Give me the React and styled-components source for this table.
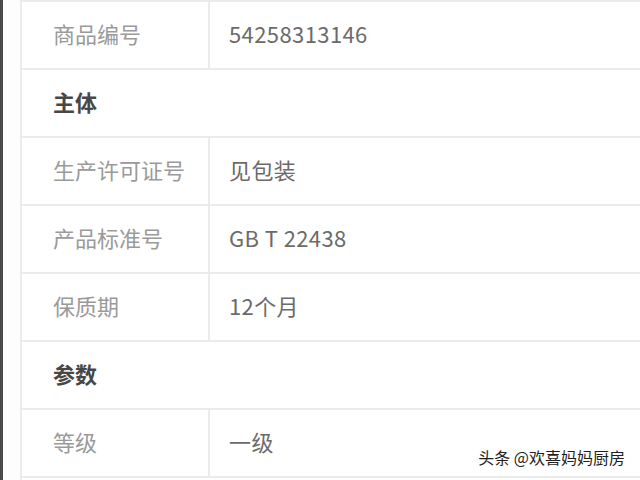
import styled, { createGlobalStyle } from "styled-components";

const GlobalStyle = createGlobalStyle`
  html, body {
    margin: 0;
    padding: 0;
    background: #ffffff;
    overflow: hidden;
  }
`;

const Page = styled.div`
  position: relative;
  display: flex;
  width: 640px;
  height: 480px;
  overflow: hidden;
  font-family: "Noto Sans CJK SC", "Noto Sans", sans-serif;
`;

const EdgeBar = styled.div`
  width: 3px;
  flex-shrink: 0;
  background: #4a4a4a;
`;

const Gutter = styled.div`
  width: 17px;
  flex-shrink: 0;
  background: #fdfdfd;
`;

const Table = styled.div`
  flex: 1;
  min-width: 640px;
  border-top: 2px solid #ebebeb;
  border-left: 2px solid #ebebeb;
  background: #fff;
`;

const Row = styled.div`
  display: flex;
  height: 66px;
  border-bottom: 2px solid #ebebeb;
`;

const Cell = styled.div`
  display: flex;
  align-items: center;
  padding-bottom: 5px;
  box-sizing: border-box;
  font-size: 22px;
`;

const Label = styled(Cell)`
  width: 188px;
  padding-left: 31px;
  border-right: 2px solid #ebebeb;
  color: #9a9a9a;
`;

const Value = styled(Cell)`
  flex: 1;
  padding-left: 19px;
  color: #6b6b6b;
  letter-spacing: 0.4px;
`;

const Heading = styled(Cell)`
  padding-left: 31px;
  font-weight: 700;
  color: #474747;
`;

const Watermark = styled.div`
  position: absolute;
  right: 15px;
  bottom: 11px;
  font-size: 16px;
  color: #1f1f1f;
  text-shadow: 0 0 2px #fff, 1px 1px 1px #fff;
`;

const rows = [
  { label: "商品编号", value: "54258313146" },
  { heading: "主体" },
  { label: "生产许可证号", value: "见包装" },
  { label: "产品标准号", value: "GB T 22438" },
  { label: "保质期", value: "12个月" },
  { heading: "参数" },
  { label: "等级", value: "一级" },
];

export default function App() {
  return (
    <>
      <GlobalStyle />
      <Page>
        <EdgeBar />
        <Gutter />
        <Table>
          {rows.map((r, i) => (
            <Row key={i}>
              {r.heading ? (
                <Heading>{r.heading}</Heading>
              ) : (
                <>
                  <Label>{r.label}</Label>
                  <Value>{r.value}</Value>
                </>
              )}
            </Row>
          ))}
        </Table>
        <Watermark>头条 @欢喜妈妈厨房</Watermark>
      </Page>
    </>
  );
}
